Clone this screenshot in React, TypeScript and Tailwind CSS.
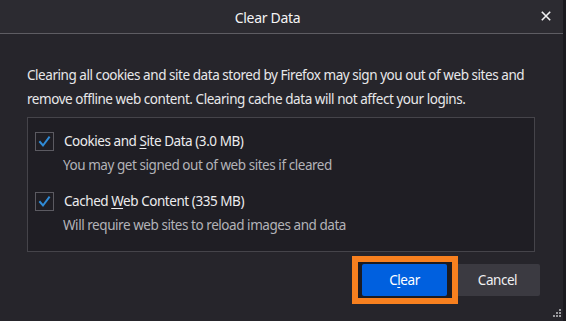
function Check() {
  return (
    <div className="w-[19px] h-[19px] shrink-0 border border-[#5b5a61] bg-[#1f1e24] flex items-center justify-center">
      <svg width="15" height="15" viewBox="0 0 15 15" fill="none">
        <path d="M3 8 L6 11.5 L12 3.5" stroke="#2f8bd6" strokeWidth="2" strokeLinecap="square" strokeLinejoin="miter" />
      </svg>
    </div>
  );
}

export default function App() {
  return (
    <div className="relative w-[566px] h-[321px] overflow-hidden flex flex-col bg-[#26252b] border-r-[3px] border-[#1b1a1f] font-['Noto_Sans',sans-serif] text-[13.5px] tracking-[-0.45px] text-[#e8e8ea]">
      {/* header */}
      <div className="h-[34px] shrink-0 flex items-center border-b border-[#5e5d63] bg-[#2c2b31]">
        <div className="w-[535px] text-center pt-[2px] text-[14px] tracking-[-0.3px] text-[#f4f4f5]">Clear Data</div>
        <button className="ml-[6px] w-[10px] h-[10px] flex items-center justify-center mt-[-1px]">
          <svg width="10" height="10" viewBox="0 0 10 10">
            <path d="M0.8 0.8 L9.2 9.2 M9.2 0.8 L0.8 9.2" stroke="#f0f0f2" strokeWidth="1.6" />
          </svg>
        </button>
      </div>

      {/* body */}
      <div className="flex flex-col pl-[27px] pr-[23px] pt-[30px]">
        <p className="leading-[23.5px] whitespace-nowrap">
          Clearing all cookies and site data stored by Firefox may sign you out of web sites and
          <br />
          remove offline web content. Clearing cache data will not affect your logins.
        </p>

        <div className="mt-[6px] w-[508px] h-[135px] border border-[#45444a] bg-[#1f1e24] pt-[14px] pl-[7px]">
          <div className="flex items-center h-[19px]">
            <Check />
            <span className="ml-[10px] leading-[19px] text-[#ececee]">
              Cookies and <span className="underline underline-offset-[2px]">S</span>ite Data (3.0 MB)
            </span>
          </div>
          <div className="mt-[5px] ml-[28px] leading-[19px] text-[#b3b3b8]">You may get signed out of web sites if cleared</div>

          <div className="flex items-center h-[19px] mt-[17px]">
            <Check />
            <span className="ml-[10px] leading-[19px] text-[#ececee]">
              Cached <span className="underline underline-offset-[2px]">W</span>eb Content (335 MB)
            </span>
          </div>
          <div className="mt-[5px] ml-[28px] leading-[19px] text-[#b3b3b8]">Will require web sites to reload images and data</div>
        </div>

        <div className="mt-[12px] flex justify-end gap-[8px]">
          <div className="relative">
            <div className="absolute left-[-10px] top-[-8px] right-[-11px] bottom-[-8px] border-[6px] border-[#f7801f] bg-[#1c1b21] z-10" />
            <button className="relative z-20 w-[85px] h-[32px] rounded-[2px] bg-[#0060df] text-white">
              C<span className="underline underline-offset-[2px]">l</span>ear
            </button>
          </div>
          <button className="w-[85px] h-[32px] rounded-[2px] bg-[#3b3a41] text-[#f0f0f2]">Cancel</button>
        </div>
      </div>

      {/* resize grip */}
      <svg className="absolute left-[553px] top-[309px]" width="9" height="9" viewBox="0 0 9 9">
        <rect x="6" y="0" width="2" height="2" fill="#9a9a9e" />
        <rect x="3" y="3" width="2" height="2" fill="#9a9a9e" />
        <rect x="6" y="3" width="2" height="2" fill="#9a9a9e" />
        <rect x="0" y="6" width="2" height="2" fill="#9a9a9e" />
        <rect x="3" y="6" width="2" height="2" fill="#9a9a9e" />
        <rect x="6" y="6" width="2" height="2" fill="#9a9a9e" />
      </svg>
    </div>
  );
}
